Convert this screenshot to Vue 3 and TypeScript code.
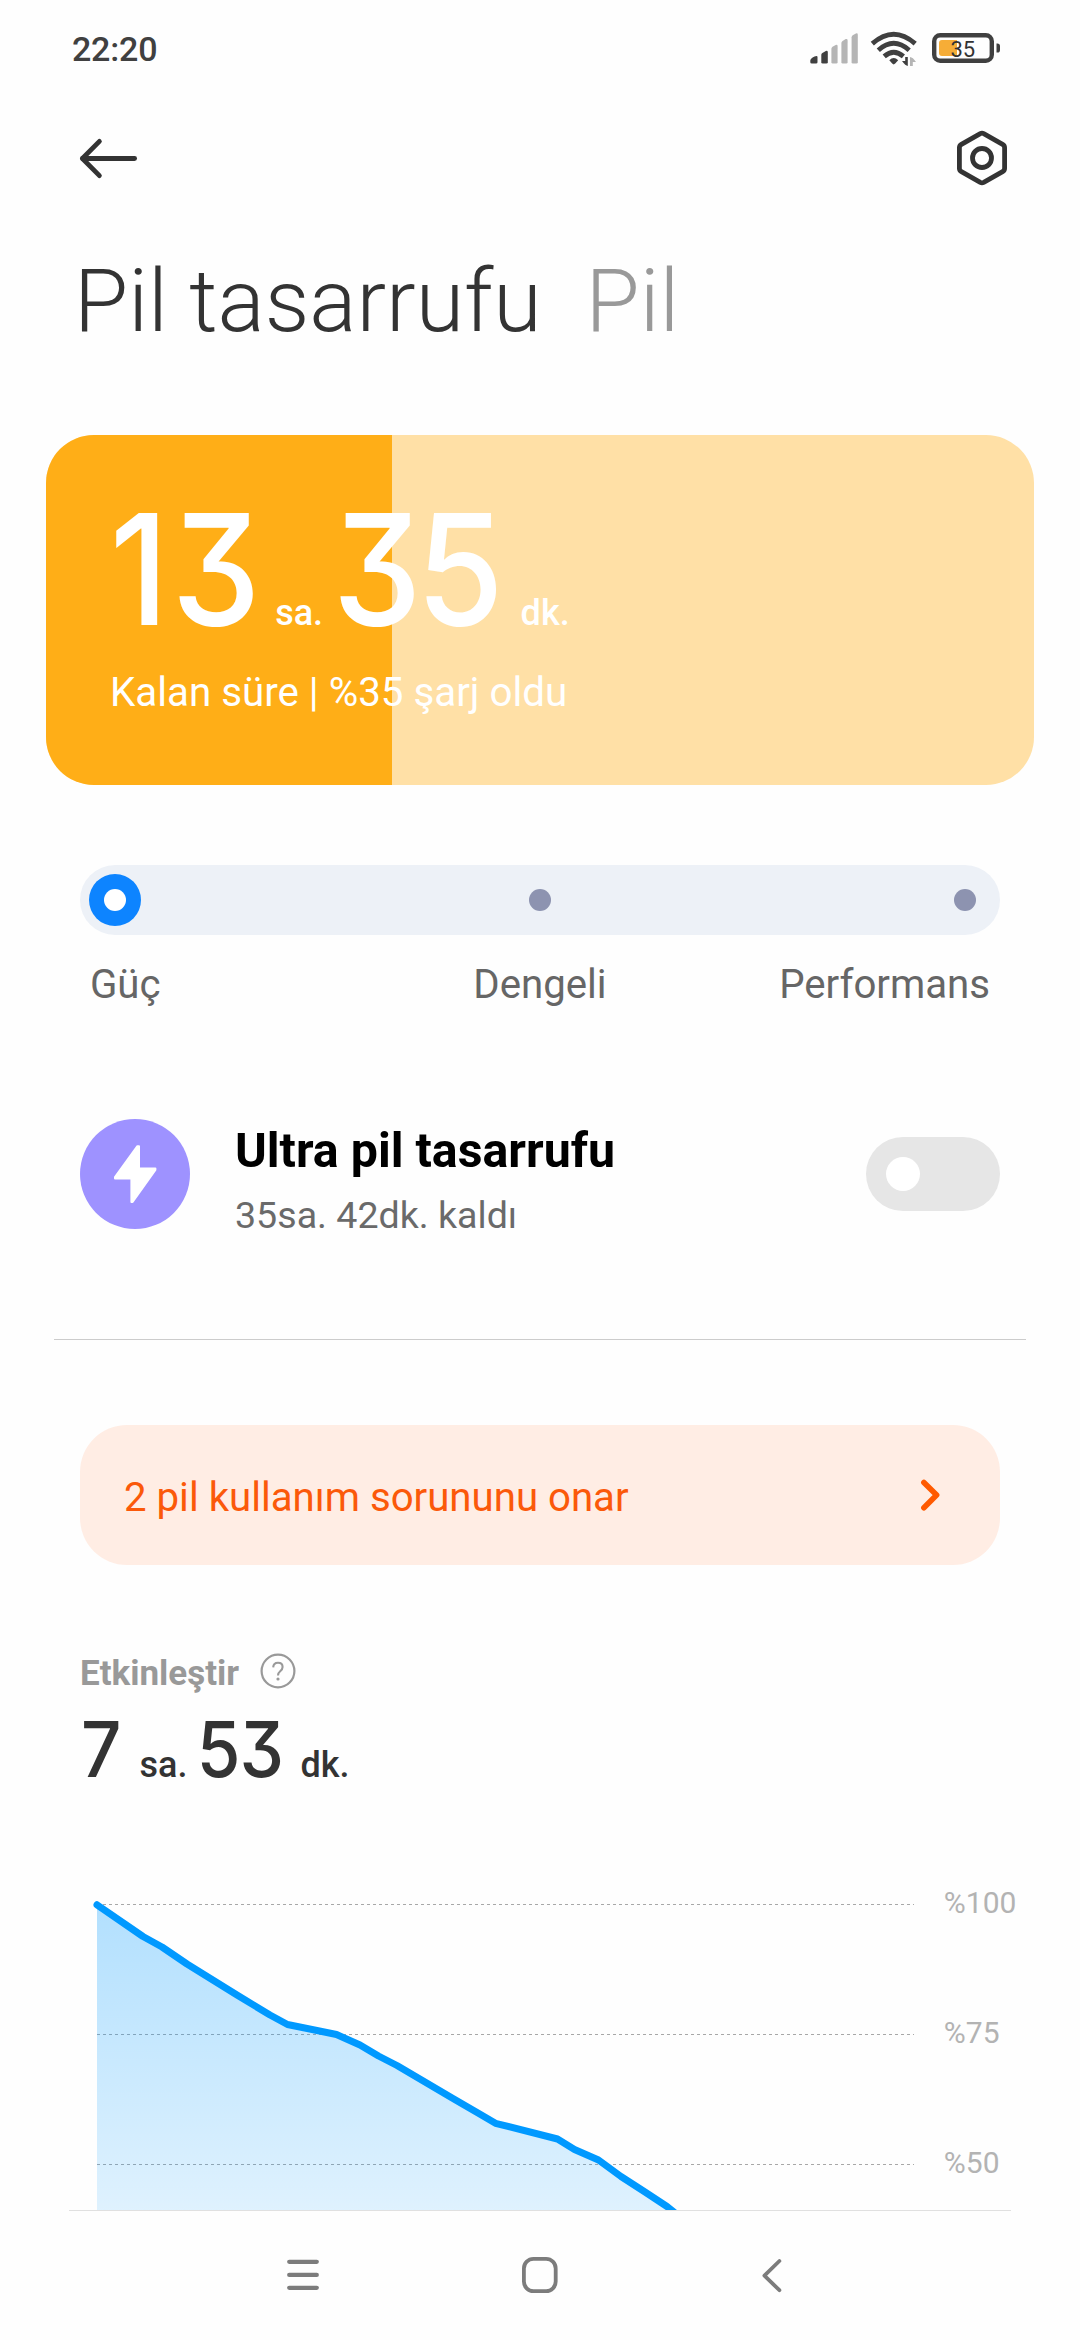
<script setup lang="ts">
interface Point {
  x: number
  y: number
}

const charge = 35

const modes: string[] = ['Güç', 'Dengeli', 'Performans']
const activeMode = 0

const gridLines = [
  { label: '%100', y: 24.5 },
  { label: '%75', y: 154.5 },
  { label: '%50', y: 284.5 },
]

const history: Point[] = [
  { x: 97, y: 24.8 },
  { x: 143, y: 56.5 },
  { x: 162, y: 67 },
  { x: 187, y: 84 },
  { x: 237, y: 115 },
  { x: 270, y: 135 },
  { x: 287.5, y: 144.5 },
  { x: 336.5, y: 154.5 },
  { x: 360, y: 165 },
  { x: 378.5, y: 176 },
  { x: 397, y: 185.5 },
  { x: 453, y: 218.5 },
  { x: 478, y: 233 },
  { x: 495.5, y: 243.3 },
  { x: 557.5, y: 259 },
  { x: 574.5, y: 269.5 },
  { x: 598.5, y: 280 },
  { x: 621, y: 296.5 },
  { x: 645, y: 312 },
  { x: 667, y: 326.5 },
  { x: 690, y: 345 },
]

const linePath = history.map((p, i) => `${i === 0 ? 'M' : 'L'}${p.x} ${p.y}`).join(' ')
const areaPath = `${linePath} V545 H97 Z`
</script>

<template>
  <main class="screen">
    <header class="status">
      <span class="clock">22:20</span>
      <svg class="status-icons" width="192" height="36" viewBox="809 30 192 36">
        <g fill="#404040">
          <path d="M812.6 57.6 Q814.5 56 816.5 56 Q817.5 56 817.5 57 V62.2 Q817.5 63.6 816 63.6 H811.8 Q810.3 63.6 810.3 62.2 V60.5 Q810.3 59.3 812.6 57.6Z" />
          <path d="M821.3 54.8 Q821.3 53.6 822.4 52.9 L825.8 50.9 Q827.8 50.3 827.8 52.2 V62.2 Q827.8 63.6 826.3 63.6 H822.8 Q821.3 63.6 821.3 62.2Z" />
        </g>
        <g fill="#b5b5b5">
          <path d="M831.4 48.8 Q831.4 47.5 832.5 46.7 L835.7 44.9 Q837.6 44.3 837.6 46.2 V62.2 Q837.6 63.6 836.2 63.6 H832.8 Q831.4 63.6 831.4 62.2Z" />
          <path d="M841.4 43 Q841.4 41.7 842.5 40.9 L845.7 39.1 Q847.6 38.5 847.6 40.4 V62.2 Q847.6 63.6 846.2 63.6 H842.8 Q841.4 63.6 841.4 62.2Z" />
          <path d="M851.6 37.3 Q851.6 36 852.7 35.2 L855.9 33.4 Q857.8 32.8 857.8 34.7 V62.2 Q857.8 63.6 856.4 63.6 H853 Q851.6 63.6 851.6 62.2Z" />
        </g>
        <g fill="none" stroke="#404040" stroke-width="4.8">
          <path d="M872.3 43.6 Q893.7 24.8 915.2 43.6" />
          <path d="M878.3 50.2 Q893.7 36.4 909.2 50.2" />
          <path d="M884.2 56.4 Q893.7 48 903.4 56.4" />
        </g>
        <path d="M889.3 60.2 Q893.7 56 898.2 60.2 L895.2 63.6 Q893.7 65.2 892.2 63.6Z" fill="#404040" />
        <path d="M907.8 57 V66 Q905.5 65.8 902 61 H905.2 V57Z" fill="#404040" />
        <path d="M910 66 V57 Q912.8 57.2 916 62 H912.8 V66Z" fill="#b5b5b5" />
        <rect x="934.2" y="35.2" width="57.6" height="25.6" rx="6" fill="none" stroke="#404040" stroke-width="4.4" />
        <path d="M996.5 43.5 Q1000 43 1000 46 V50 Q1000 53 996.5 52.5Z" fill="#404040" />
        <path d="M942 40 H957 V56 H942 Q939 56 939 53 V43 Q939 40 942 40Z" fill="#f6ad37" />
        <text x="950.4" y="56.6" class="battery-text">{{ charge }}</text>
      </svg>
    </header>

    <nav class="topbar">
      <svg width="64" height="56" viewBox="76 130 64 56" fill="none" stroke="#333" stroke-width="4.8" stroke-linecap="round" stroke-linejoin="round">
        <path d="M134.6 158.5 H82.6" />
        <path d="M99.4 141.4 L82.4 158.5 L99.4 175.6" />
      </svg>
      <svg width="56" height="60" viewBox="954 128 56 60" fill="none" stroke="#333" stroke-width="4.8" stroke-linejoin="round">
        <path d="M980.3 133.6 Q982 132.7 983.7 133.6 L1002.6 144.4 Q1004.6 145.6 1004.6 147.8 V168.2 Q1004.6 170.4 1002.6 171.6 L983.7 182.4 Q982 183.3 980.3 182.4 L961.4 171.6 Q959.4 170.4 959.4 168.2 V147.8 Q959.4 145.6 961.4 144.4Z" />
        <circle cx="982" cy="158" r="9.5" />
      </svg>
    </nav>

    <div class="tabs">
      <h1 class="tab active">Pil tasarrufu</h1>
      <span class="tab">Pil</span>
    </div>

    <section class="battery-card">
      <div class="battery-level" :style="{ width: charge + '%' }"></div>
      <div class="battery-body">
        <svg class="duration" width="480" height="130" fill="#fff">
          <text class="digits big" transform="translate(0 120) scale(0.92 1)" x="-2.5 64.8">13</text>
          <text class="unit" x="163.2" y="120">sa.</text>
          <text class="digits big" transform="translate(0 120) scale(0.92 1)" x="239.8 330.8">35</text>
          <text class="unit" x="408.6" y="120">dk.</text>
        </svg>
        <p class="battery-note">Kalan süre | %{{ charge }} şarj oldu</p>
      </div>
    </section>

    <section class="modes">
      <div class="track">
        <span v-for="(mode, i) in modes" :key="mode" class="stop" :class="{ on: i === activeMode }"><i></i></span>
      </div>
      <div class="mode-labels">
        <span v-for="mode in modes" :key="mode">{{ mode }}</span>
      </div>
    </section>

    <section class="ultra">
      <svg class="bolt" width="110" height="110" viewBox="80 1119 110 110">
        <circle cx="135" cy="1174" r="55" fill="#9e92ff" />
        <path d="M137.4 1146.2 L115 1177 V1178.4 H131.4 V1202 H132.6 L155.4 1169.8 V1168.6 H139 V1146.2Z" fill="#fff" stroke="#fff" stroke-width="2" stroke-linejoin="round" />
      </svg>
      <div class="ultra-text">
        <h2>Ultra pil tasarrufu</h2>
        <p>35sa. 42dk. kaldı</p>
      </div>
      <span class="switch"><i></i></span>
    </section>

    <hr class="divider" />

    <section class="banner">
      <span>2 pil kullanım sorununu onar</span>
      <svg width="24" height="36" viewBox="918 1477 24 36" fill="none" stroke="#ff5a00" stroke-width="5.6" stroke-linecap="round" stroke-linejoin="round">
        <path d="M923.9 1482.4 L936.6 1495.1 L923.9 1507.8" />
      </svg>
    </section>

    <section class="usage">
      <div class="usage-head">
        <span>Etkinleştir</span>
        <svg width="36" height="36" viewBox="0 0 36 36">
          <circle cx="18" cy="18" r="16.4" fill="none" stroke="#999" stroke-width="2.2" />
          <path d="M13.2 14.4 Q13.4 9.8 18 9.8 Q22.6 9.8 22.6 14 Q22.6 16.2 20.2 18.2 Q18 20 18 22.4" fill="none" stroke="#999" stroke-width="2.1" />
          <circle cx="18" cy="26" r="1.6" fill="#999" />
        </svg>
      </div>
      <svg class="duration" width="300" height="70" fill="#333">
        <text class="digits small" transform="translate(0 62) scale(0.92 1)" x="1">7</text>
        <text class="unit" x="59.5" y="62">sa.</text>
        <text class="digits small" transform="translate(0 62) scale(0.92 1)" x="127 173.3">53</text>
        <text class="unit" x="220.5" y="62">dk.</text>
      </svg>
    </section>

    <svg class="chart" width="1080" height="330" viewBox="0 0 1080 330">
      <defs>
        <linearGradient id="fade" gradientUnits="userSpaceOnUse" x1="0" y1="24" x2="0" y2="545">
          <stop offset="0" stop-color="#0099ff" stop-opacity="0.3" />
          <stop offset="1" stop-color="#0099ff" stop-opacity="0" />
        </linearGradient>
      </defs>
      <g v-for="line in gridLines" :key="line.label">
        <line x1="97" x2="914" :y1="line.y" :y2="line.y" stroke="#a8a8a8" stroke-width="1" stroke-dasharray="3 3" />
        <text class="grid-label" x="943.8" :y="line.y + 8.7">{{ line.label }}</text>
      </g>
      <path :d="areaPath" fill="url(#fade)" />
      <path :d="linePath" fill="none" stroke="#0099ff" stroke-width="7" stroke-linecap="round" stroke-linejoin="round" />
    </svg>

    <hr class="nav-line" />

    <footer class="navbar">
      <svg width="540" height="44" viewBox="270 2253 540 44" fill="none" stroke="#7c7c7c" stroke-linecap="round" stroke-linejoin="round">
        <g stroke-width="4.2">
          <path d="M289.2 2261.8 H316.8" />
          <path d="M289.2 2274.9 H316.8" />
          <path d="M289.2 2287.8 H316.8" />
        </g>
        <rect x="523.9" y="2258.9" width="31.8" height="32.2" rx="9.5" stroke-width="3.8" />
        <path d="M779.4 2261 L764.4 2275.6 L779.4 2290.2" stroke-width="3.8" />
      </svg>
    </footer>
  </main>
</template>

<style>
html,
body {
  margin: 0;
  background: #fefefe;
}
</style>

<style scoped>
.screen {
  width: 1080px;
  height: 2340px;
  overflow: hidden;
  display: flex;
  flex-direction: column;
  background: #fefefe;
  font-family: Roboto, 'Noto Sans', sans-serif;
  color: #333;
}

svg {
  display: block;
}

h1,
h2,
p {
  margin: 0;
}

.status {
  height: 96px;
  display: flex;
  align-items: center;
  justify-content: space-between;
  padding: 0 79px 0 72px;
  flex: none;
}

.clock {
  font-size: 34px;
  line-height: 40px;
  font-weight: 500;
  letter-spacing: -0.2px;
  color: #404040;
  padding-top: 1px;
}

.battery-text {
  font-size: 22px;
  font-weight: 400;
  fill: #333;
}

.topbar {
  height: 124px;
  display: flex;
  align-items: center;
  justify-content: space-between;
  padding: 0 70px 0 76px;
  flex: none;
}

.tabs {
  display: flex;
  gap: 44px;
  padding: 29px 0 0 74px;
}

.tab {
  font-size: 88px;
  line-height: 104px;
  font-weight: 300;
  color: #999;
  white-space: nowrap;
}

.tab.active {
  color: #333;
}

.battery-card {
  position: relative;
  height: 350px;
  margin: 82px 46px 0;
  border-radius: 48px;
  overflow: hidden;
  background: #ffe0a6;
  flex: none;
}

.battery-level {
  position: absolute;
  inset: 0 auto 0 0;
  background: #ffae17;
}

.battery-body {
  position: relative;
  padding: 70px 0 0 66px;
}

.duration {
  overflow: visible;
}

.digits {
  font-family: Inter, Roboto, sans-serif;
  font-feature-settings: 'cv09' 1;
}

.big {
  font-size: 154px;
  font-weight: 450;
}

.small {
  font-size: 77px;
  font-weight: 450;
}

.unit {
  font-size: 36px;
  font-weight: 500;
}

.battery-note {
  margin: 34px 0 0 -2px;
  font-size: 40.3px;
  line-height: 48px;
  color: #fff;
}

.modes {
  margin: 80px 80px 0;
}

.track {
  height: 70px;
  box-sizing: border-box;
  border-radius: 35px;
  padding: 0 9px;
  background: #edf1f7;
  display: flex;
  align-items: center;
  justify-content: space-between;
}

.stop {
  width: 52px;
  height: 52px;
  border-radius: 50%;
  display: flex;
  align-items: center;
  justify-content: center;
}

.stop i {
  width: 22px;
  height: 22px;
  border-radius: 50%;
  background: #8d93b0;
}

.stop.on {
  background: #0d84ff;
}

.stop.on i {
  background: #fff;
}

.mode-labels {
  margin-top: 26px;
  padding: 0 10px;
  display: grid;
  grid-template-columns: 1fr 1fr 1fr;
  font-size: 40.2px;
  line-height: 48px;
  color: #666;
}

.mode-labels span:nth-child(2) {
  text-align: center;
}

.mode-labels span:nth-child(3) {
  text-align: right;
}

.ultra {
  height: 110px;
  margin: 110px 80px 0;
  display: flex;
  align-items: flex-start;
  flex: none;
}

.ultra-text {
  flex: 1;
  padding: 4px 0 0 45px;
}

.ultra-text h2 {
  font-size: 48.3px;
  line-height: 56px;
  font-weight: 700;
  color: #000;
}

.ultra-text p {
  margin-top: 13px;
  font-size: 37.6px;
  line-height: 46px;
  color: #6a6a6a;
}

.switch {
  width: 134px;
  height: 74px;
  margin-top: 18px;
  box-sizing: border-box;
  padding: 20px;
  border-radius: 37px;
  background: #e6e6e6;
}

.switch i {
  display: block;
  width: 34px;
  height: 34px;
  border-radius: 50%;
  background: #fff;
}

.divider {
  width: 972px;
  height: 1px;
  margin: 110px auto 0;
  border: 0;
  background: #ccc;
  flex: none;
}

.banner {
  height: 140px;
  box-sizing: border-box;
  margin: 85px 80px 0;
  padding: 0 58px 0 44px;
  border-radius: 47px;
  background: #ffede4;
  color: #fb590a;
  font-size: 40.2px;
  line-height: 48px;
  display: flex;
  align-items: center;
  justify-content: space-between;
  flex: none;
}

.banner span {
  padding-top: 5px;
}

.usage {
  margin: 88px 80px 0;
}

.usage-head {
  height: 40px;
  display: flex;
  gap: 21px;
  font-size: 35px;
  line-height: 40px;
  font-weight: 700;
  color: #999;
}

.usage-head span {
  padding-top: 1px;
}

.usage .duration {
  margin-top: 22px;
}

.chart {
  margin-top: 95px;
  flex: none;
}

.grid-label {
  font-size: 30px;
  fill: #b3b3b3;
}

.nav-line {
  width: 942px;
  height: 1px;
  margin: 0 auto;
  border: 0;
  background: #e0e0e0;
  flex: none;
}

.navbar {
  height: 128px;
  display: flex;
  align-items: center;
  justify-content: center;
  flex: none;
}
</style>
